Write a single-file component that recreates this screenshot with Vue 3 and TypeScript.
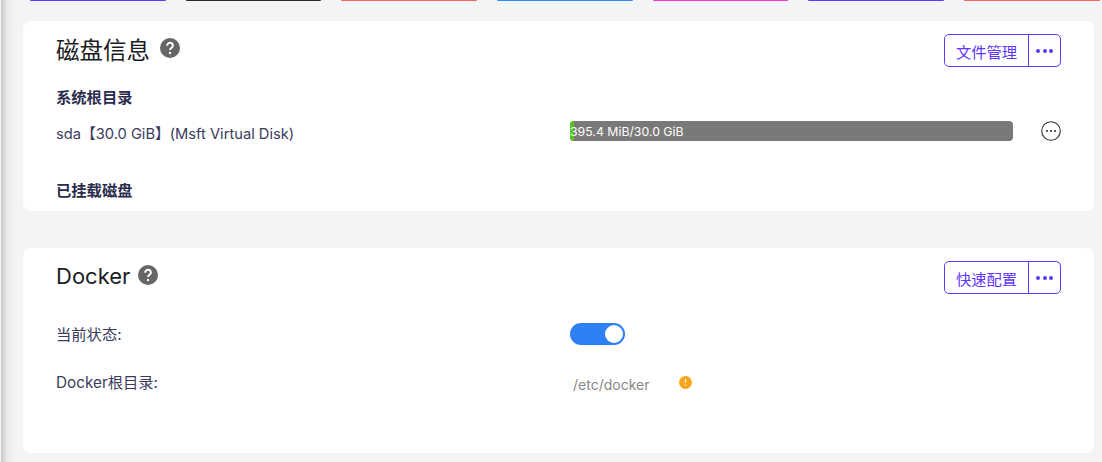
<template>
  <div class="page">
    <div class="edge-shadow"></div>

    <div class="stat-strip">
      <div v-for="color in statColors" :key="color" class="stat-card" :style="{ background: color }"></div>
    </div>

    <section class="panel disk-panel">
      <header class="panel-header">
        <h2 class="panel-title">
          磁盘信息
          <svg class="help-icon disk-help" viewBox="0 0 20 20">
            <circle cx="10" cy="10" r="10" fill="#666" />
            <path d="M7.1 7.7a2.9 2.9 0 0 1 5.8 0c0 1.9-2.9 2.2-2.9 4.3" fill="none" stroke="#fff" stroke-width="1.9" />
            <circle cx="10" cy="15" r="1.2" fill="#fff" />
          </svg>
        </h2>
        <div class="btn-group">
          <button class="btn-main">文件管理</button>
          <button class="btn-more"><span></span><span></span><span></span></button>
        </div>
      </header>

      <div class="section-label first">系统根目录</div>
      <div class="disk-row">
        <div class="row-label">sda【30.0 GiB】(Msft Virtual Disk)</div>
        <div class="progress">
          <div class="progress-fill"></div>
          <span class="progress-text">395.4 MiB/30.0 GiB</span>
        </div>
        <svg class="more-icon" viewBox="0 0 20 20">
          <circle cx="10" cy="10" r="9.3" fill="none" stroke="#333" stroke-width="1.1" />
          <circle cx="6" cy="10" r="1.1" fill="#333" />
          <circle cx="10" cy="10" r="1.1" fill="#333" />
          <circle cx="14" cy="10" r="1.1" fill="#333" />
        </svg>
      </div>
      <div class="section-label second">已挂载磁盘</div>
    </section>

    <section class="panel docker-panel">
      <header class="panel-header">
        <h2 class="panel-title docker-title">
          Docker
          <svg class="help-icon" viewBox="0 0 20 20">
            <circle cx="10" cy="10" r="10" fill="#666" />
            <path d="M7.1 7.7a2.9 2.9 0 0 1 5.8 0c0 1.9-2.9 2.2-2.9 4.3" fill="none" stroke="#fff" stroke-width="1.9" />
            <circle cx="10" cy="15" r="1.2" fill="#fff" />
          </svg>
        </h2>
        <div class="btn-group">
          <button class="btn-main">快速配置</button>
          <button class="btn-more"><span></span><span></span><span></span></button>
        </div>
      </header>

      <div class="info-row status-row">
        <div class="row-label">当前状态:</div>
        <div class="switch"><span class="switch-knob"></span></div>
      </div>
      <div class="info-row path-row">
        <div class="row-label">Docker根目录:</div>
        <span class="path-value">/etc/docker</span>
        <svg class="warn-icon" viewBox="0 0 13 13">
          <circle cx="6.5" cy="6.5" r="6.5" fill="#faa61a" />
          <path d="M6.5 3v4.2" stroke="#fff" stroke-width="1.1" />
          <circle cx="6.5" cy="9.3" r="0.7" fill="#fff" />
        </svg>
      </div>
    </section>
  </div>
</template>

<script setup lang="ts">
const statColors: string[] = [
  '#5b3bff',
  '#2a2a2a',
  '#ff5f5f',
  '#2f8cff',
  '#ff2fd0',
  '#5a3cff',
  '#ff5f5f',
]
</script>

<style>
html,
body {
  margin: 0;
  background: #f3f4f6;
}
</style>

<style scoped>
.page {
  position: relative;
  box-sizing: border-box;
  width: 1102px;
  height: 462px;
  overflow: hidden;
  background: #f3f4f6;
  font-family: Inter, "Noto Sans CJK SC", sans-serif;
  font-size: 15.3px;
  color: #3b3b5e;
}

.edge-shadow {
  position: absolute;
  left: 1px;
  top: 0;
  width: 14px;
  height: 100%;
  background: linear-gradient(to right, #c9c9cb, #e9eaec 45%, #f3f4f6);
}

.stat-strip {
  display: grid;
  grid-template-columns: repeat(7, 135.7px);
  column-gap: 20px;
  height: 1px;
  margin-left: 30px;
}

.stat-card {
  height: 1px;
  border-radius: 0 0 3px 3px;
}

.panel {
  position: relative;
  box-sizing: border-box;
  width: 1071px;
  margin-left: 23px;
  padding: 0 33px;
  background: #fff;
  border-radius: 8px;
}

.disk-panel {
  height: 190px;
  margin-top: 20px;
}

.docker-panel {
  height: 205px;
  margin-top: 37px;
}

.panel-header {
  display: flex;
  align-items: flex-start;
  justify-content: space-between;
  padding-top: 13px;
}

.panel-title {
  display: flex;
  align-items: center;
  margin: 0;
  height: 29px;
  font-size: 23.5px;
  font-weight: 400;
  color: #1c1c24;
}

.help-icon {
  width: 20px;
  height: 20px;
  margin-left: 10px;
}

.disk-help {
  position: relative;
  top: -1px;
}

.docker-title {
  font-size: 22px;
}

.docker-title .help-icon {
  margin-left: 8px;
  position: relative;
  top: -1px;
}

.btn-group {
  display: flex;
  box-sizing: border-box;
  height: 33px;
  border: 1px solid #5f35ff;
  border-radius: 5px;
}

.btn-main {
  width: 84px;
  padding: 0;
  border: 0;
  border-right: 1px solid #5f35ff;
  background: transparent;
  color: #5f35ff;
  font: inherit;
}

.btn-more {
  display: flex;
  align-items: center;
  justify-content: center;
  gap: 2.5px;
  width: 31px;
  padding: 0;
  border: 0;
  background: transparent;
}

.btn-more span {
  width: 4px;
  height: 4px;
  border-radius: 50%;
  background: #5f35ff;
}

.section-label {
  font-weight: 700;
  line-height: 20px;
  color: #2b2b4d;
}

.section-label.first {
  margin-top: 21px;
}

.section-label.second {
  margin-top: 40px;
}

.disk-row {
  display: flex;
  align-items: center;
  height: 20px;
  margin-top: 13px;
}

.row-label {
  width: 514px;
  flex: none;
}

.disk-row .row-label {
  position: relative;
  top: 1px;
  font-size: 14.7px;
}

.progress {
  position: relative;
  display: flex;
  align-items: center;
  width: 443px;
  height: 20px;
  overflow: hidden;
  border-radius: 4px;
  background: #797979;
}

.progress-fill {
  width: 4px;
  height: 100%;
  background: #52c41a;
}

.progress-text {
  position: absolute;
  left: 0;
  font-size: 12.3px;
  color: #fff;
}

.more-icon {
  width: 20px;
  height: 20px;
  margin-left: 28px;
}

.info-row {
  display: flex;
  align-items: center;
}

.status-row {
  height: 22px;
  margin-top: 29px;
}

.status-row .row-label,
.path-row .row-label {
  position: relative;
  top: -1px;
}

.path-row {
  height: 20px;
  margin-top: 27px;
}

.switch {
  position: relative;
  width: 55px;
  height: 22px;
  border-radius: 11px;
  background: #2f80f5;
}

.switch-knob {
  position: absolute;
  top: 2px;
  right: 2px;
  width: 18px;
  height: 18px;
  border-radius: 50%;
  background: #fff;
}

.path-value {
  width: 109px;
  padding-left: 3px;
  box-sizing: border-box;
  font-size: 14px;
  color: #888;
  position: relative;
  top: 2px;
}

.warn-icon {
  width: 13px;
  height: 13px;
}
</style>
